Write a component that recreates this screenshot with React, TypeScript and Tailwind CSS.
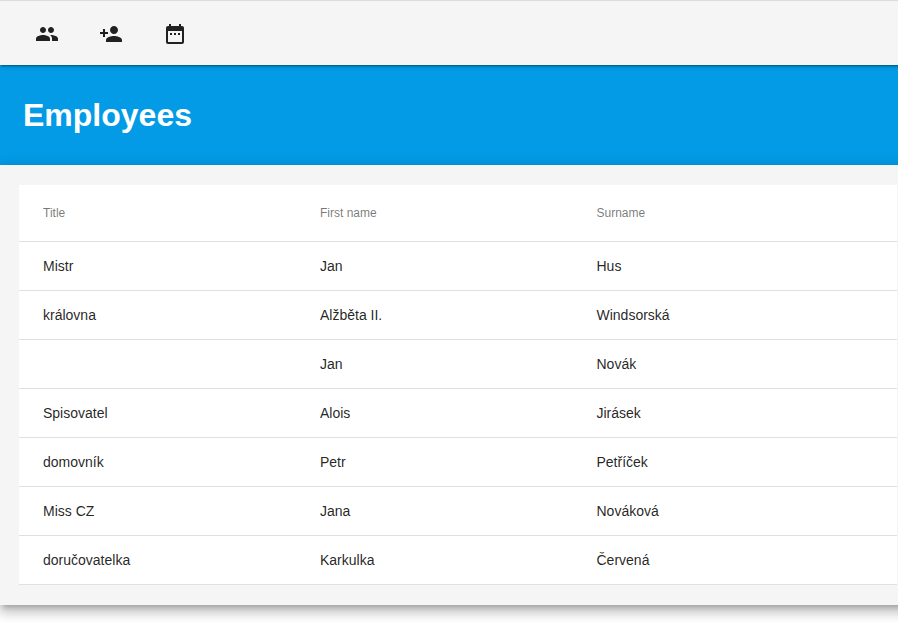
import React from "react";

const rows = [
  ["Mistr", "Jan", "Hus"],
  ["královna", "Alžběta II.", "Windsorská"],
  ["", "Jan", "Novák"],
  ["Spisovatel", "Alois", "Jirásek"],
  ["domovník", "Petr", "Petříček"],
  ["Miss CZ", "Jana", "Nováková"],
  ["doručovatelka", "Karkulka", "Červená"],
];

const icons = [
  "M16 11c1.66 0 2.99-1.34 2.99-3S17.66 5 16 5c-1.66 0-3 1.34-3 3s1.34 3 3 3zm-8 0c1.66 0 2.99-1.34 2.99-3S9.66 5 8 5C6.34 5 5 6.34 5 8s1.34 3 3 3zm0 2c-2.33 0-7 1.17-7 3.5V19h14v-2.5c0-2.33-4.67-3.5-7-3.5zm8 0c-.29 0-.62.02-.97.05 1.16.84 1.97 1.97 1.97 3.45V19h6v-2.5c0-2.33-4.67-3.5-7-3.5z",
  "M15 12c2.21 0 4-1.79 4-4s-1.79-4-4-4-4 1.79-4 4 1.79 4 4 4zm-9-2V7H4v3H1v2h3v3h2v-3h3v-2H6zm9 4c-2.67 0-8 1.34-8 4v2h16v-2c0-2.66-5.33-4-8-4z",
  "M9 11H7v2h2v-2zm4 0h-2v2h2v-2zm4 0h-2v2h2v-2zm2-7h-1V2h-2v2H8V2H6v2H5c-1.11 0-1.99.9-1.99 2L3 20c0 1.1.89 2 2 2h14c1.1 0 2-.9 2-2V6c0-1.1-.9-2-2-2zm0 16H5V9h14v11z",
];

export default function App() {
  return (
    <div className="h-[627px] w-full overflow-hidden bg-white font-['Liberation_Sans',Arial,sans-serif] text-black/87">
      <div className="flex h-[605px] w-[918px] flex-col">
        <nav className="relative z-10 flex h-[65px] shrink-0 items-center gap-10 border-t border-[#dcdcdc] bg-[#f5f5f5] px-[35px] pt-0.5 shadow-[0_3px_1px_-2px_rgba(0,0,0,0.2),0_2px_2px_0_rgba(0,0,0,0.14),0_1px_5px_0_rgba(0,0,0,0.12)]">
          {icons.map((d) => (
            <svg key={d} viewBox="0 0 24 24" className="size-6 fill-[#212121]">
              <path d={d} />
            </svg>
          ))}
        </nav>
        <header className="flex h-[100px] shrink-0 items-center bg-[#039be5] pl-[23px]">
          <h1 className="text-[32px] leading-10 font-bold text-white">Employees</h1>
        </header>
        <main className="relative flex-1 bg-[#f5f5f5] pt-5 pl-[19px] shadow-[0_5px_5px_-3px_rgba(0,0,0,0.2),0_8px_10px_1px_rgba(0,0,0,0.14),0_3px_14px_2px_rgba(0,0,0,0.12)]">
          <div className="w-[878px] bg-white">
            <div className="grid h-[57px] grid-cols-[277px_276.5px_1fr] items-center border-b border-black/12 pl-6 text-xs text-black/54">
              <span>Title</span>
              <span>First name</span>
              <span>Surname</span>
            </div>
            {rows.map((row, i) => (
              <div key={i} className="grid h-[49px] grid-cols-[277px_276.5px_1fr] items-center border-b border-black/12 pl-6 text-sm">
                {row.map((cell, j) => (
                  <span key={j}>{cell}</span>
                ))}
              </div>
            ))}
          </div>
        </main>
      </div>
    </div>
  );
}
